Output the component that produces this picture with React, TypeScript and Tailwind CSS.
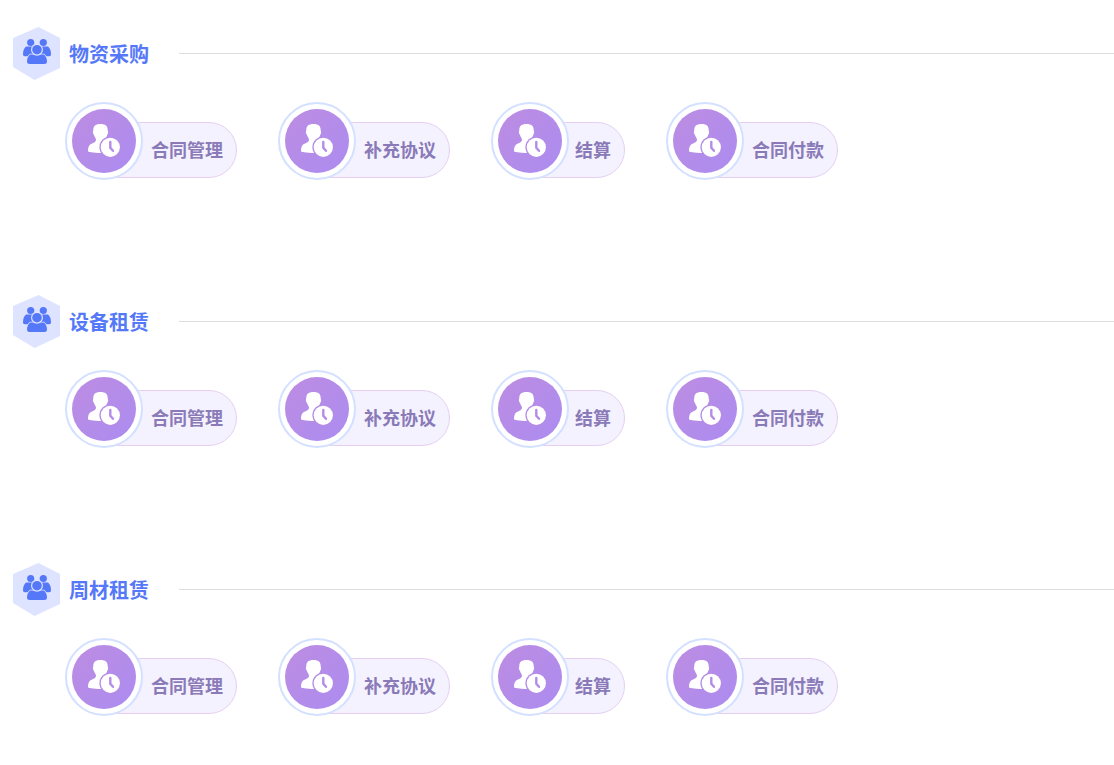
interface Section {
  title: string;
  items: string[];
}

const items = ["合同管理", "补充协议", "结算", "合同付款"];

const sections: Section[] = [
  { title: "物资采购", items },
  { title: "设备租赁", items },
  { title: "周材租赁", items },
];

function TeamIcon() {
  return (
    <svg viewBox="0 0 47 53" className="w-[47px] h-[53px] shrink-0" aria-hidden="true">
      <path d="M25.5 0L47 11V41L21.5 53L0 40V11Z" fill="#dee3ff" />
      <g fill="#5578f8">
        <circle cx="17.7" cy="15.5" r="3.6" />
        <circle cx="30.3" cy="15.5" r="3.6" />
        <path d="M13 19.6H21V29.3H11.8C10.6 29.3 10 28.6 10 27.3C10 24 11 21.2 13 19.6Z" />
        <path d="M35 19.6H27V29.3H36.2C37.4 29.3 38 28.6 38 27.3C38 24 37 21.2 35 19.6Z" />
      </g>
      <path
        d="M17 27.5H31C33 29 34 32 34 34.5C34 36.2 33 37 31.5 37H16.5C15 37 14 36.2 14 34.5C14 32 15 29 17 27.5Z"
        fill="#5578f8"
        stroke="#dee3ff"
        strokeWidth="1.4"
        paintOrder="stroke"
      />
      <circle cx="24" cy="22.7" r="5.4" fill="#5578f8" stroke="#dee3ff" strokeWidth="1.2" />
    </svg>
  );
}

function UserClockIcon() {
  return (
    <svg viewBox="0 0 64 64" className="w-16 h-16" aria-hidden="true">
      <path
        d="M28.5 15C23.5 15 21.3 17 21.3 21C21.3 22 20.7 22.4 20.9 23.4C21.1 24.6 21.6 25.2 22 26C22.5 28 23.6 28.8 24 30.5C24.2 33 21.5 33.6 18.5 35.2C16.4 36.5 16 39.5 16 42C16 43.2 20.5 43.8 30 44H36V30.5L34 29.5C34 28 34.8 27.4 35.2 26C35.6 25.2 36 24.6 36.1 23.4C36.2 22.4 35.7 22 35.7 21C35.7 17 33.5 15 28.5 15Z"
        fill="#fff"
      />
      <circle cx="38.3" cy="38.3" r="10.9" fill="#b48ce8" />
      <circle cx="38.3" cy="38.3" r="9.6" fill="#fff" />
      <path d="M38.3 33V38.8L41 41.8" fill="none" stroke="#b48ce8" strokeWidth="2.4" strokeLinecap="round" />
    </svg>
  );
}

function EntryButton({ label }: { label: string }) {
  const labelPadding = label.length > 2 ? "pl-[63px]" : "pl-[61px]";

  return (
    <button type="button" className="flex items-end cursor-pointer">
      <span className="relative z-10 p-[5px] border-2 border-[#d3e0ff] rounded-full bg-white">
        <span className="block rounded-full bg-linear-to-br from-[#bd8ce2] to-[#ab8cf0]">
          <UserClockIcon />
        </span>
      </span>
      <span
        className={`flex items-center h-14 -ml-14 mb-0.5 pt-0.5 pr-[13px] border border-[#e5cff3] rounded-[28px] bg-[#f4f2fe] text-lg font-bold text-[#8a7ab8] whitespace-nowrap ${labelPadding}`}
      >
        {label}
      </span>
    </button>
  );
}

function App() {
  return (
    <main className="flex flex-col gap-[115px] pt-[27px] pb-[50px] bg-white font-['Liberation_Sans','Noto_Sans_CJK_SC',sans-serif]">
      {sections.map((section) => (
        <section key={section.title}>
          <header className="flex items-center pl-[13px]">
            <TeamIcon />
            <h2 className="ml-[9px] mr-[30px] pt-[3px] text-xl font-bold text-[#5578f8] whitespace-nowrap">{section.title}</h2>
            <hr className="flex-1 border-[#dedede]" />
          </header>
          <div className="flex flex-wrap gap-[41px] mt-[22px] pl-[65px]">
            {section.items.map((item) => (
              <EntryButton key={item} label={item} />
            ))}
          </div>
        </section>
      ))}
    </main>
  );
}

export default App;
